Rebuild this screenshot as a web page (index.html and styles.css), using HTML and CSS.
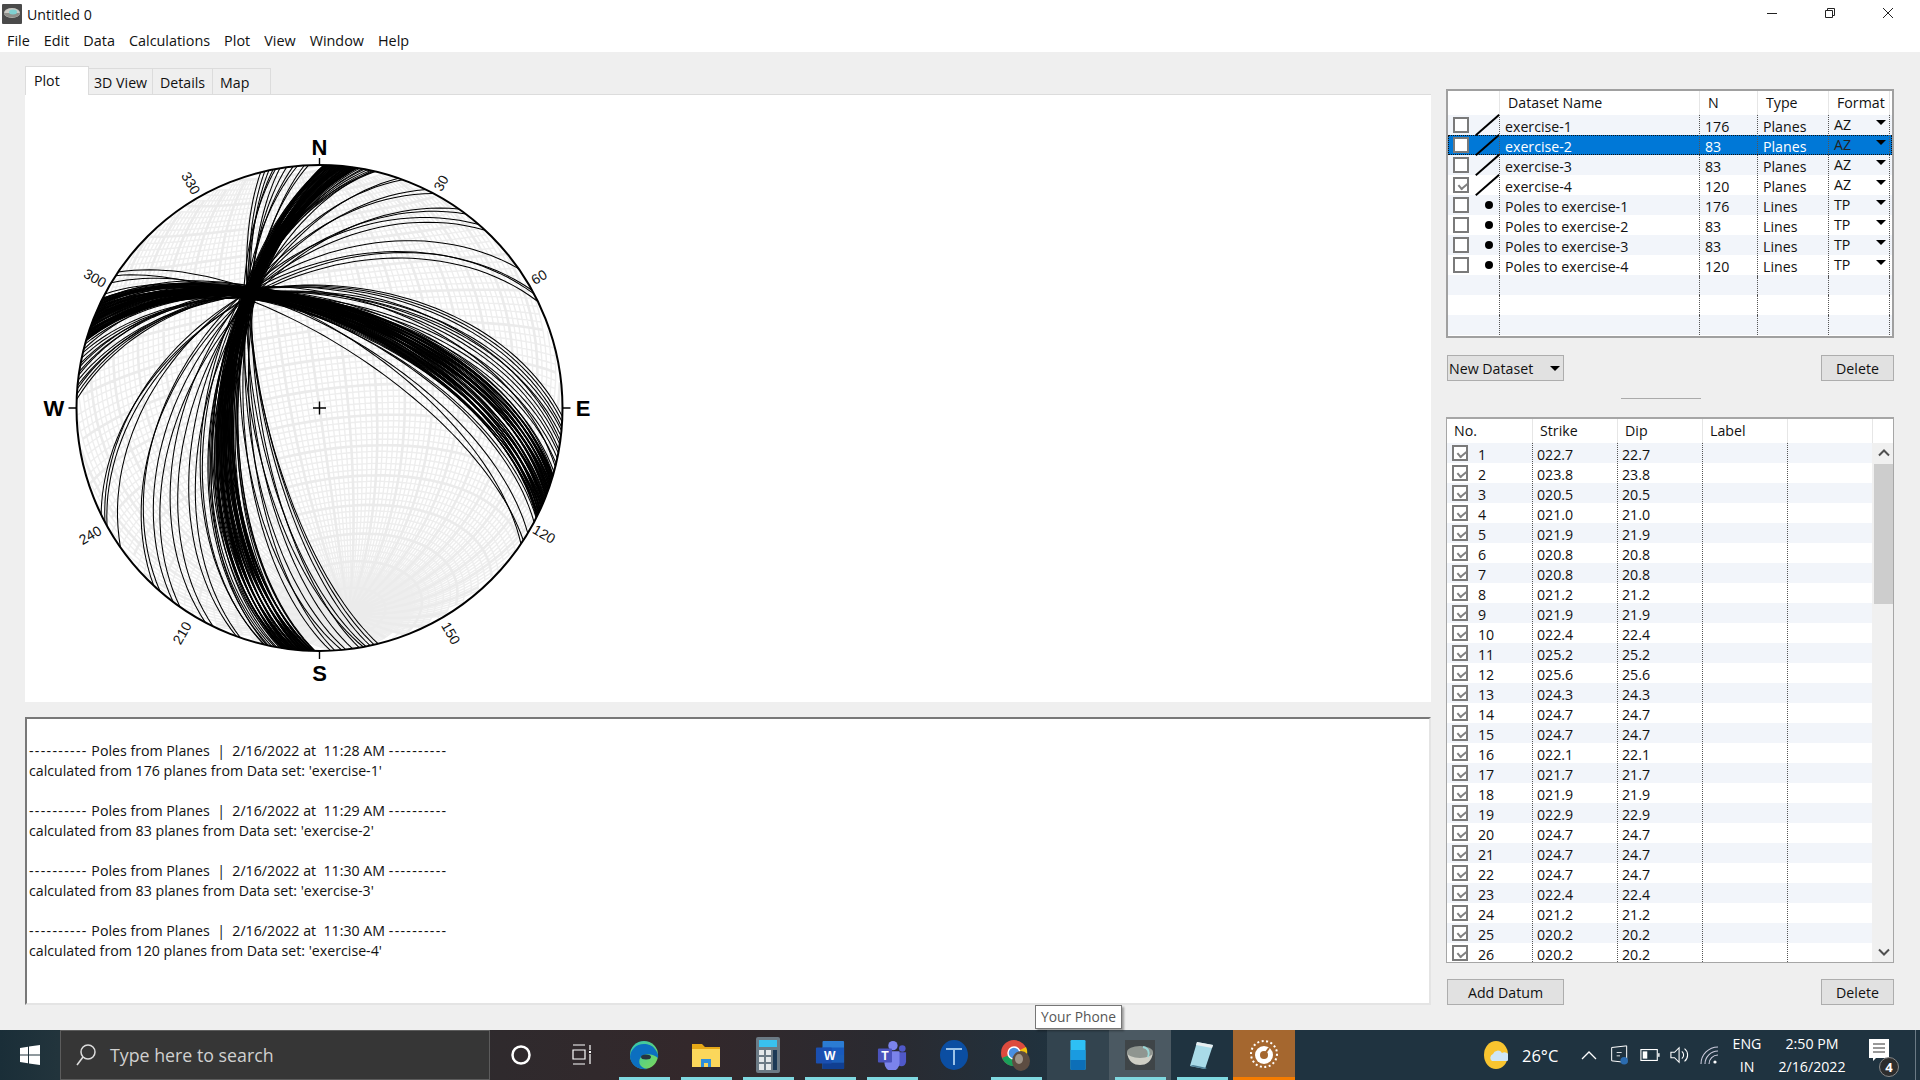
FILE: index.html
```html
<!DOCTYPE html>
<html lang="en">
<head>
<meta charset="utf-8">
<title>Untitled 0</title>
<link rel="stylesheet" href="styles.css">
</head>
<body>
<div class="app">
  <header class="titlebar">
    <svg class="appicon" viewBox="0 0 20 20"><rect width="20" height="20" rx="1" fill="#4a4a4a"/><ellipse cx="10" cy="9" rx="8" ry="5" fill="#c9c9c4"/><path d="M2 9c1 6 15 6 16 0z" fill="#8f8f8a"/><ellipse cx="11" cy="8" rx="4" ry="2.5" fill="#7fd0d0"/></svg>
    <span class="wintitle">Untitled 0</span>
    <div class="winbtns">
      <svg class="winbtn" viewBox="0 0 12 12"><path d="M1 6.5h10" stroke="#222" fill="none"/></svg>
      <svg class="winbtn" viewBox="0 0 12 12"><path d="M1.5 3.5h7v7h-7zM3.5 3.5v-2h7v7h-2" stroke="#222" fill="none"/></svg>
      <svg class="winbtn" viewBox="0 0 12 12"><path d="M1 1l10 10M11 1L1 11" stroke="#222" fill="none"/></svg>
    </div>
  </header>
  <nav class="menubar">
    <span class="menuitem">File</span><span class="menuitem">Edit</span><span class="menuitem">Data</span><span class="menuitem">Calculations</span><span class="menuitem">Plot</span><span class="menuitem">View</span><span class="menuitem">Window</span><span class="menuitem">Help</span>
  </nav>
  <main class="main">
    <section class="leftcol">
      <div class="tabs">
        <span class="tab active">Plot</span><span class="tab t3d">3D View</span><span class="tab tdet">Details</span><span class="tab tmap">Map</span>
      </div>
      <div class="plotpanel">
        <svg id="net" class="net" width="640" height="607" viewBox="0 0 640 607">
          <g id="grid"></g>
          <g id="planes"></g>
          <circle class="rim" cx="294.5" cy="313" r="243"/>
          <path class="tick" d="M294.5 70v-7M294.5 556v8M51.5 313h-8M537.5 313h8M288 313h13M294.5 306.500v13"/>
          <text class="cardinal" x="294.5" y="60">N</text>
          <text class="cardinal" x="294.5" y="586">S</text>
          <text class="cardinal" x="29" y="321">W</text>
          <text class="cardinal" x="558" y="321">E</text>
          <text class="deg" transform="translate(416 88) rotate(-60)">30</text>
          <text class="deg" transform="translate(514 182) rotate(-30)">60</text>
          <text class="deg" transform="translate(519 439) rotate(30)">120</text>
          <text class="deg" transform="translate(426 538) rotate(60)">150</text>
          <text class="deg" transform="translate(157 538) rotate(-60)">210</text>
          <text class="deg" transform="translate(65 440) rotate(-30)">240</text>
          <text class="deg" transform="translate(70 183) rotate(30)">300</text>
          <text class="deg" transform="translate(166 88) rotate(60)">330</text>
        </svg>
      </div>
      <div class="log">
        <p class="logline">&nbsp;</p>
        <p class="logline"><span class="dash">----------</span> Poles from Planes &nbsp;|&nbsp; 2/16/2022 at &nbsp;11:28 AM <span class="dash">----------</span></p>
        <p class="logline">calculated from 176 planes from Data set: 'exercise-1'</p>
        <p class="logline">&nbsp;</p>
        <p class="logline"><span class="dash">----------</span> Poles from Planes &nbsp;|&nbsp; 2/16/2022 at &nbsp;11:29 AM <span class="dash">----------</span></p>
        <p class="logline">calculated from 83 planes from Data set: 'exercise-2'</p>
        <p class="logline">&nbsp;</p>
        <p class="logline"><span class="dash">----------</span> Poles from Planes &nbsp;|&nbsp; 2/16/2022 at &nbsp;11:30 AM <span class="dash">----------</span></p>
        <p class="logline">calculated from 83 planes from Data set: 'exercise-3'</p>
        <p class="logline">&nbsp;</p>
        <p class="logline"><span class="dash">----------</span> Poles from Planes &nbsp;|&nbsp; 2/16/2022 at &nbsp;11:30 AM <span class="dash">----------</span></p>
        <p class="logline">calculated from 120 planes from Data set: 'exercise-4'</p>
      </div>
    </section>
    <aside class="rightcol">
      <div class="dstable">
        <div class="dshead"><span></span><span>Dataset Name</span><span>N</span><span>Type</span><span>Format</span><span></span></div>
        <div class="dsrow"><span class="c0"><i class="cb"></i><i class="ln"></i></span><span>exercise-1</span><span>176</span><span>Planes</span><span class="fmt">AZ<i class="tri"></i></span><span></span></div>
        <div class="dsrow sel"><span class="c0"><i class="cb"></i><i class="ln"></i></span><span>exercise-2</span><span>83</span><span>Planes</span><span class="fmt">AZ<i class="tri"></i></span><span></span></div>
        <div class="dsrow"><span class="c0"><i class="cb"></i><i class="ln"></i></span><span>exercise-3</span><span>83</span><span>Planes</span><span class="fmt">AZ<i class="tri"></i></span><span></span></div>
        <div class="dsrow"><span class="c0"><i class="cb on"></i><i class="ln"></i></span><span>exercise-4</span><span>120</span><span>Planes</span><span class="fmt">AZ<i class="tri"></i></span><span></span></div>
        <div class="dsrow"><span class="c0"><i class="cb"></i><i class="dot"></i></span><span>Poles to exercise-1</span><span>176</span><span>Lines</span><span class="fmt">TP<i class="tri"></i></span><span></span></div>
        <div class="dsrow"><span class="c0"><i class="cb"></i><i class="dot"></i></span><span>Poles to exercise-2</span><span>83</span><span>Lines</span><span class="fmt">TP<i class="tri"></i></span><span></span></div>
        <div class="dsrow"><span class="c0"><i class="cb"></i><i class="dot"></i></span><span>Poles to exercise-3</span><span>83</span><span>Lines</span><span class="fmt">TP<i class="tri"></i></span><span></span></div>
        <div class="dsrow"><span class="c0"><i class="cb"></i><i class="dot"></i></span><span>Poles to exercise-4</span><span>120</span><span>Lines</span><span class="fmt">TP<i class="tri"></i></span><span></span></div>
        <div class="dsrow"><span></span><span></span><span></span><span></span><span></span><span></span></div>
        <div class="dsrow"><span></span><span></span><span></span><span></span><span></span><span></span></div>
        <div class="dsrow"><span></span><span></span><span></span><span></span><span></span><span></span></div>
      </div>
      <div class="btnrow">
        <span class="btn btnwide btnleft">New Dataset<i class="tri tridark"></i></span>
        <span class="btn btnnarrow">Delete</span>
      </div>
      <div class="splitter"></div>
      <div class="ptable">
        <div class="phead"><span>No.</span><span>Strike</span><span>Dip</span><span>Label</span><span></span><span></span></div>
        <div class="pbody">
          <div class="prows">
            <div class="prow"><span class="c0"><i class="cb on"></i><b>1</b></span><span>022.7</span><span>22.7</span><span></span><span></span></div>
            <div class="prow"><span class="c0"><i class="cb on"></i><b>2</b></span><span>023.8</span><span>23.8</span><span></span><span></span></div>
            <div class="prow"><span class="c0"><i class="cb on"></i><b>3</b></span><span>020.5</span><span>20.5</span><span></span><span></span></div>
            <div class="prow"><span class="c0"><i class="cb on"></i><b>4</b></span><span>021.0</span><span>21.0</span><span></span><span></span></div>
            <div class="prow"><span class="c0"><i class="cb on"></i><b>5</b></span><span>021.9</span><span>21.9</span><span></span><span></span></div>
            <div class="prow"><span class="c0"><i class="cb on"></i><b>6</b></span><span>020.8</span><span>20.8</span><span></span><span></span></div>
            <div class="prow"><span class="c0"><i class="cb on"></i><b>7</b></span><span>020.8</span><span>20.8</span><span></span><span></span></div>
            <div class="prow"><span class="c0"><i class="cb on"></i><b>8</b></span><span>021.2</span><span>21.2</span><span></span><span></span></div>
            <div class="prow"><span class="c0"><i class="cb on"></i><b>9</b></span><span>021.9</span><span>21.9</span><span></span><span></span></div>
            <div class="prow"><span class="c0"><i class="cb on"></i><b>10</b></span><span>022.4</span><span>22.4</span><span></span><span></span></div>
            <div class="prow"><span class="c0"><i class="cb on"></i><b>11</b></span><span>025.2</span><span>25.2</span><span></span><span></span></div>
            <div class="prow"><span class="c0"><i class="cb on"></i><b>12</b></span><span>025.6</span><span>25.6</span><span></span><span></span></div>
            <div class="prow"><span class="c0"><i class="cb on"></i><b>13</b></span><span>024.3</span><span>24.3</span><span></span><span></span></div>
            <div class="prow"><span class="c0"><i class="cb on"></i><b>14</b></span><span>024.7</span><span>24.7</span><span></span><span></span></div>
            <div class="prow"><span class="c0"><i class="cb on"></i><b>15</b></span><span>024.7</span><span>24.7</span><span></span><span></span></div>
            <div class="prow"><span class="c0"><i class="cb on"></i><b>16</b></span><span>022.1</span><span>22.1</span><span></span><span></span></div>
            <div class="prow"><span class="c0"><i class="cb on"></i><b>17</b></span><span>021.7</span><span>21.7</span><span></span><span></span></div>
            <div class="prow"><span class="c0"><i class="cb on"></i><b>18</b></span><span>021.9</span><span>21.9</span><span></span><span></span></div>
            <div class="prow"><span class="c0"><i class="cb on"></i><b>19</b></span><span>022.9</span><span>22.9</span><span></span><span></span></div>
            <div class="prow"><span class="c0"><i class="cb on"></i><b>20</b></span><span>024.7</span><span>24.7</span><span></span><span></span></div>
            <div class="prow"><span class="c0"><i class="cb on"></i><b>21</b></span><span>024.7</span><span>24.7</span><span></span><span></span></div>
            <div class="prow"><span class="c0"><i class="cb on"></i><b>22</b></span><span>024.7</span><span>24.7</span><span></span><span></span></div>
            <div class="prow"><span class="c0"><i class="cb on"></i><b>23</b></span><span>022.4</span><span>22.4</span><span></span><span></span></div>
            <div class="prow"><span class="c0"><i class="cb on"></i><b>24</b></span><span>021.2</span><span>21.2</span><span></span><span></span></div>
            <div class="prow"><span class="c0"><i class="cb on"></i><b>25</b></span><span>020.2</span><span>20.2</span><span></span><span></span></div>
            <div class="prow"><span class="c0"><i class="cb on"></i><b>26</b></span><span>020.2</span><span>20.2</span><span></span><span></span></div>
          </div>
          <div class="scroll">
            <svg class="scrollarrow" viewBox="0 0 20 20"><path d="M5 12l5-5 5 5" fill="none" stroke="#505050" stroke-width="2"/></svg>
            <div class="thumb"></div>
            <svg class="scrollarrow scrolldown" viewBox="0 0 20 20"><path d="M5 8l5 5 5-5" fill="none" stroke="#505050" stroke-width="2"/></svg>
          </div>
        </div>
      </div>
      <div class="btnrow btnrowb">
        <span class="btn btnwide">Add Datum</span>
        <span class="btn btnnarrow">Delete</span>
      </div>
    </aside>
  </main>
  <footer class="taskbar">
    <div class="start">
      <svg class="ic20" viewBox="0 0 20 20"><path d="M0 3l8-1.2V9.500H0zM9 1.600L20 0v9.500H9zM0 10.500h8v7.700L0 17zM9 10.500h11V20L9 18.400z" fill="#fff"/></svg>
    </div>
    <div class="search">
      <svg class="searchicon" viewBox="0 0 20 24"><circle cx="12" cy="9" r="7" fill="none" stroke="#ddd" stroke-width="1.500"/><path d="M7 14L1 22" stroke="#ddd" stroke-width="1.500"/></svg>
      <span class="searchtext">Type here to search</span>
    </div>
    <div class="slot sys"><svg class="ic22" viewBox="0 0 22 22"><circle cx="11" cy="11" r="8.500" fill="none" stroke="#fff" stroke-width="2.500"/></svg></div>
    <div class="slot sys"><svg class="ic22" viewBox="0 0 22 22"><path d="M2 1h12M2 6h12v9H2zM2 20h12M19 1v5M19 10v10" fill="none" stroke="#fff" stroke-width="1.200"/><rect x="18" y="7" width="2" height="2" fill="#fff"/></svg></div>
    <div class="slot run"><svg class="ic30" viewBox="0 0 30 30"><defs><linearGradient id="eg" x1="0" y1="0" x2="1" y2="1"><stop offset="0" stop-color="#2ec4b6"/><stop offset="1" stop-color="#7ed957"/></linearGradient></defs><circle cx="15" cy="15" r="14" fill="url(#eg)"/><path d="M1 17C2 27 12 30 18 29 10 28 8 20 13 16c4-3 12-2 16 2 1-3-1-6-3-9C22 3 10 2 5 8 3 10 1 13 1 17z" fill="#0c6fc0"/><ellipse cx="17" cy="17" rx="5" ry="2.500" fill="#27343e"/></svg></div>
    <div class="slot run"><svg class="ic30" viewBox="0 0 30 30"><path d="M1 4h10l3 3h15v6H1z" fill="#e6a817"/><path d="M1 9h28v18H1z" fill="#fbd75b"/><path d="M10 19h10v8h-3v-4h-4v4h-3z" fill="#2f8fdc"/></svg></div>
    <div class="slot run"><svg class="ic36" viewBox="0 0 24 36"><rect width="24" height="36" rx="2" fill="#6b7a85"/><rect x="3" y="3" width="18" height="7" fill="#39c0ee"/><path d="M3 13h5v5H3zM10 13h5v5h-5zM3 20h5v5H3zM10 20h5v5h-5zM3 27h5v6H3zM10 27h5v6h-5z" fill="#e4e8ea"/><rect x="17" y="13" width="4" height="20" fill="#1c3a57"/></svg></div>
    <div class="slot run"><svg class="ic30" viewBox="0 0 30 32"><rect x="7" y="1" width="23" height="30" rx="1" fill="#2b7cd3"/><rect x="7" y="8" width="23" height="8" fill="#185abd"/><rect x="7" y="16" width="23" height="8" fill="#1b5eb8"/><rect x="7" y="24" width="23" height="7" fill="#103f91"/><rect y="8" width="17" height="17" rx="1" fill="#1a4fb0"/><text class="wordw" x="8.500" y="21">W</text></svg></div>
    <div class="slot run"><svg class="ic30" viewBox="0 0 30 32"><circle cx="16" cy="6" r="5" fill="#7b83eb"/><circle cx="26" cy="9" r="3.500" fill="#5059c9"/><path d="M20 13h10v10a5 5 0 0 1-10 0z" fill="#5059c9"/><path d="M7 12h16v13a8 8 0 0 1-16 0z" fill="#7b83eb"/><rect y="9" width="15" height="15" rx="1" fill="#4b53bc"/><text class="wordw" x="3.500" y="21">T</text></svg></div>
    <div class="slot"><svg class="ic30" viewBox="0 0 30 30"><ellipse cx="15" cy="15" rx="14" ry="15" fill="#0b4ea2"/><path d="M7 8h16v2h-7v15h-2V10H7z" fill="#9cc3e8"/></svg></div>
    <div class="slot run"><svg class="ic32" viewBox="0 0 32 32"><circle cx="14" cy="14" r="13" fill="#dd4b3e"/><path d="M14 14L26 8a13 13 0 0 1-8 18z" fill="#f4c20d"/><path d="M14 14L16 27A13 13 0 0 1 2 19z" fill="#19a05a"/><circle cx="14" cy="14" r="6" fill="#4a90e2" stroke="#fff" stroke-width="1.500"/><ellipse cx="21" cy="22" rx="9" ry="10" fill="#5d4d42"/><ellipse cx="19" cy="20" rx="4" ry="5" fill="#a0968a"/></svg></div>
    <div class="slot hover"><svg class="ic30" viewBox="0 0 20 36"><rect width="18" height="36" x="1" rx="1.500" fill="#2ec0f5"/><rect x="1" y="12" width="18" height="12" fill="#1a9be0"/><path d="M1 24h18v10.500a1.500 1.500 0 0 1-1.500 1.500h-15A1.500 1.500 0 0 1 1 34.500z" fill="#0d6fb8"/></svg></div>
    <div class="slot active run"><svg class="ic30" viewBox="0 0 30 30"><rect width="30" height="30" fill="#3f4548"/><path d="M2 12c1 10 7 13 13 13s12-3 13-13z" fill="#cfcfc6"/><ellipse cx="15" cy="12" rx="13" ry="6" fill="#8f9590"/><path d="M18 7c5 1 7 5 5 10" stroke="#9ad6d6" stroke-width="2" fill="none"/></svg></div>
    <div class="slot run"><svg class="ic30" viewBox="0 0 30 30"><path d="M10 2l16 3-8 24L3 26z" fill="#a9dbe8"/><path d="M10 2l16 3-1 3-16-3z" fill="#e8eef0"/><path d="M3 26l15 3 2-1-14-3z" fill="#4d7f96"/></svg></div>
    <div class="slot orange"><svg class="ic30" viewBox="0 0 30 30"><circle cx="15" cy="15" r="13" fill="none" stroke="#fff" stroke-width="2" stroke-dasharray="2 2.500"/><circle cx="15" cy="16" r="9" fill="#fff"/><circle cx="15" cy="16" r="4" fill="#a5672f"/><path d="M15 16l5-7" stroke="#a5672f" stroke-width="2"/></svg></div>
    <div class="tray">
      <svg class="weather" viewBox="0 0 24 28"><ellipse cx="12" cy="14" rx="12" ry="14" fill="#f8c42f"/><path d="M8 20a4 4 0 0 1 1-7 5 5 0 0 1 9-1 4 4 0 0 1 5 8z" fill="#cfe6f7"/></svg>
      <span class="temp">26°C</span>
      <svg class="chev" viewBox="0 0 16 10"><path d="M1 9l7-7 7 7" fill="none" stroke="#fff" stroke-width="1.300"/></svg>
      <svg class="tray20 first" viewBox="0 0 22 24"><path d="M1 3l18-2v20L1 19z" fill="none" stroke="#fff" stroke-width="1.200"/><path d="M7 9h6M7 13h4" stroke="#fff"/><circle cx="16" cy="19" r="4.500" fill="#2b6cb0"/></svg>
      <svg class="tray20" viewBox="0 0 22 14"><rect x="1" y="1" width="18" height="12" fill="none" stroke="#fff" stroke-width="1.200"/><rect x="3" y="3" width="5" height="8" fill="#fff"/><rect x="20" y="5" width="1.500" height="4" fill="#fff"/></svg>
      <svg class="tray20" viewBox="0 0 22 20"><path d="M1 7h4l5-5v16l-5-5H1z" fill="none" stroke="#fff" stroke-width="1.200"/><path d="M13 6a5 5 0 0 1 0 8M16 3a9 9 0 0 1 0 14" fill="none" stroke="#fff" stroke-width="1.200"/></svg>
      <svg class="tray20" viewBox="0 0 20 20"><path d="M1 19A17 17 0 0 1 18 2M5 19A13 13 0 0 1 18 6M9 19A9 9 0 0 1 18 10" fill="none" stroke="#ccd" stroke-width="1.100"/><circle cx="15" cy="17" r="1.600" fill="#fff"/></svg>
      <div class="twoline lang"><span>ENG</span><span>IN</span></div>
      <div class="twoline clock"><span>2:50 PM</span><span>2/16/2022</span></div>
      <div class="notif">
        <svg class="notifbox" viewBox="0 0 20 22"><path d="M0 0h20v19H7l-3 3v-3H0z" fill="#fff"/><path d="M4 5h12M4 9h12M4 13h12" stroke="#333"/></svg>
        <span class="badge">4</span>
      </div>
      <div class="showdesk"></div>
    </div>
  </footer>
  <div class="tooltip">Your Phone</div>
</div>
<script src="script.js"></script>
</body>
</html>
```

FILE: styles.css
```css
* { box-sizing: border-box; }
html, body { margin: 0; padding: 0; }
body { width: 1920px; height: 1080px; overflow: hidden; font-family: "Open Sans", "Noto Sans", sans-serif; font-size: 14.200px; color: #111; background: #fff; }
.app { position: relative; display: flex; flex-direction: column; width: 1920px; height: 1080px; }

.titlebar { display: flex; align-items: center; height: 26px; background: #fff; padding-left: 2px; flex: none; }
.appicon { width: 20px; height: 20px; margin-top: 2px; }
.wintitle { margin-left: 5px; font-size: 14.200px; margin-top: 3px; }
.winbtns { margin-left: auto; display: flex; gap: 46px; padding-right: 26px; }
.winbtn { width: 12px; height: 12px; }

.menubar { display: flex; align-items: center; height: 26px; padding: 2px 0 0; background: #fff; flex: none; font-size: 14.400px; }
.menuitem { padding: 0 7px; }

.main { flex: 1; display: flex; background: #efefef; min-height: 0; }
.leftcol { width: 1431px; padding: 15px 0 25px 25px; display: flex; flex-direction: column; flex: none; }
.tabs { display: flex; align-items: flex-end; height: 28px; flex: none; border-bottom: 1px solid #dcdcdc; }
.tab { display: block; height: 26px; border: 1px solid #dcdcdc; border-left: 0; border-bottom: 0; padding: 4px 0 0 5px; font-size: 14.200px; line-height: 20px; white-space: nowrap; }
.tab.active { height: 29px; margin-bottom: -1px; width: 64px; background: #fff; border-left: 1px solid #dcdcdc; padding: 4px 0 0 8px; position: relative; }
.t3d { width: 64px; }
.tdet { width: 60px; padding-left: 7px; }
.tmap { width: 58px; padding-left: 7px; }
.plotpanel { height: 607px; background: #fff; flex: none; overflow: hidden; }
.net { display: block; }
.rim { fill: none; stroke: #000; stroke-width: 2; }
.tick { fill: none; stroke: #000; stroke-width: 1.400; }
.cardinal { font-family: "Liberation Sans", sans-serif; font-weight: 700; font-size: 22px; text-anchor: middle; fill: #000; }
.deg { font-family: "Liberation Sans", sans-serif; font-size: 14px; text-anchor: middle; dominant-baseline: central; fill: #111; }
.gf { fill: none; stroke: #eeeeee; stroke-width: 1.400; }
.gm { fill: none; stroke: #ebebeb; stroke-width: 2.600; }
.pl { fill: none; stroke: #000; stroke-width: 1.050; }

.log { margin-top: 15px; height: 288px; background: #fff; border-style: solid; border-width: 2px; border-color: #787878 #e4e4e4 #e4e4e4 #787878; padding: 2px 0 0 2px; flex: none; }
.logline { margin: 0; height: 20px; line-height: 20px; font-size: 14.200px; white-space: nowrap; }
.dash { letter-spacing: 1.300px; }

.rightcol { width: 448px; margin-left: 15px; padding-top: 37px; display: flex; flex-direction: column; flex: none; }
.dstable { height: 249px; background: #fff; border: 2px solid #a0a0a0; flex: none; }
.dshead, .dsrow { display: grid; grid-template-columns: 51px 200px 58px 71px 61px 3px; }
.dshead { height: 24px; line-height: 23px; }
.dshead span { padding-left: 8px; border-left: 1px solid #e6e6e6; white-space: nowrap; }
.dshead span:first-child { border-left: 0; }
.dsrow { height: 20px; line-height: 23px; }
.dsrow:nth-child(even) { background: #f2f5fa; }
.dsrow > span { padding-left: 5px; border-left: 1px dotted #555; position: relative; white-space: nowrap; }
.dsrow > span:first-child { border-left: 0; padding-left: 0; }
.dsrow .fmt { line-height: 20px; }
.dsrow.sel { background: #0078d7; color: #fff; outline: 1.500px dotted #111; outline-offset: -1.500px; }
.dsrow.sel .fmt { color: #222; }
.c0 { display: block; position: relative; height: 20px; }
.cb { position: absolute; left: 5px; top: 2px; width: 16px; height: 16px; background: #fff; border: 2px solid #7a7a7a; display: block; }
.cb.on::after { content: ""; position: absolute; left: 3px; top: 1px; width: 7px; height: 4px; border-left: 2px solid #808080; border-bottom: 2px solid #808080; transform: rotate(-40deg) translate(-1px, 2px); }
.ln { position: absolute; left: 24px; top: 9px; width: 31px; height: 2px; background: #000; transform: rotate(-41deg); transform-origin: center; display: block; }
.dot { position: absolute; left: 37px; top: 6px; width: 8px; height: 8px; border-radius: 50%; background: #000; display: block; }
.tri { position: absolute; right: 3px; top: 5px; width: 0; height: 0; border-left: 5px solid transparent; border-right: 5px solid transparent; border-top: 5px solid #000; display: block; }
.fmt { position: relative; }

.btnrow { display: flex; justify-content: space-between; margin-top: 17px; padding: 0 0 0 1px; flex: none; }
.btnrowb { margin-top: 16px; }
.btn { display: block; position: relative; height: 26px; line-height: 25px; background: #e1e1e1; border: 1px solid #adadad; text-align: center; font-size: 14.200px; }
.btnwide { width: 117px; }
.btnnarrow { width: 73px; }
.btnleft { text-align: left; padding-left: 1px; }
.tridark { right: 3px; top: 10px; }
.splitter { width: 80px; height: 1px; background: #aaa; margin: 17px 0 18px 175px; flex: none; }

.ptable { height: 546px; background: #fff; border: 1px solid #a6a6a6; border-top-width: 2px; display: flex; flex-direction: column; flex: none; overflow: hidden; }
.phead { display: grid; grid-template-columns: 85px 85px 85px 85px 85px 1fr; height: 24px; line-height: 23px; flex: none; }
.phead span { padding-left: 7px; border-left: 1px solid #e6e6e6; }
.phead span:first-child { border-left: 0; }
.pbody { display: flex; flex: 1; min-height: 0; }
.prows { width: 425px; overflow: hidden; flex: none; }
.prow { display: grid; grid-template-columns: 85px 85px 85px 85px 85px; height: 20px; line-height: 23px; }
.prow:nth-child(odd) { background: #f2f5fa; }
.prow > span { padding-left: 4px; border-left: 1px dotted #555; }
.prow > span:first-child { border-left: 0; padding-left: 0; }
.prow b { font-weight: 400; position: absolute; left: 31px; top: 0; }
.scroll { flex: 1; background: #f0f0f0; display: flex; flex-direction: column; padding-left: 2px; }
.scrollarrow { width: 20px; height: 21px; flex: none; }
.thumb { height: 140px; background: #cdcdcd; flex: none; }
.scrolldown { margin-top: auto; margin-bottom: 0; }

.taskbar { height: 50px; flex: none; display: flex; background: linear-gradient(90deg, #1a2e38 0%, #22343c 3%, #2f2a2d 26%, #33282b 36%, #2a2a30 46%, #1f3340 56%, #1f3340 100%); color: #fff; }
.start { width: 60px; display: flex; align-items: center; justify-content: center; flex: none; }
.ic20 { width: 20px; height: 20px; }
.search { width: 430px; background: #363636; border: 1px solid #5c5c5c; display: flex; align-items: center; padding-left: 15px; flex: none; }
.searchicon { width: 20px; height: 24px; }
.searchtext { margin-left: 14px; font-size: 17.800px; color: #d0d0d0; }
.slot { width: 62px; flex: none; display: flex; align-items: center; justify-content: center; position: relative; }
.sys { width: 61.500px; }
.ic22 { width: 22px; height: 22px; }
.ic30 { width: 30px; height: 30px; }
.ic32 { width: 32px; height: 32px; }
.ic36 { width: 24px; height: 36px; }
.wordw { font-family: "Liberation Sans", sans-serif; font-size: 13px; font-weight: 700; fill: #fff; }
.run::after { content: ""; position: absolute; left: 5.500px; right: 5.500px; bottom: 0; height: 3px; background: #7fd8e0; }
.hover { background: #33444f; }
.active { background: #4b5962; }
.orange { background: #a5672f; border-bottom: 3px solid #f57c00; }
.tray { flex: 1; position: relative; display: flex; align-items: center; padding-left: 189px; }
.weather { width: 24px; height: 28px; }
.temp { margin-left: 14px; font-size: 16.500px; width: 52px; white-space: nowrap; }
.chev { width: 16px; height: 10px; margin-left: 7px; }
.tray20 { width: 20px; height: 20px; margin-left: 10px; }
.tray20.first { margin-left: 13px; }
.twoline { display: flex; flex-direction: column; align-items: center; font-size: 14.200px; line-height: 23px; white-space: nowrap; }
.lang { width: 30px; margin-left: 12px; }
.clock { width: 70px; margin-left: 15px; }
.notif { position: relative; width: 34px; height: 40px; margin-left: 16px; }
.notifbox { position: absolute; left: 6px; top: 4px; width: 20px; height: 22px; }
.badge { position: absolute; left: 16px; top: 22px; width: 20px; height: 20px; line-height: 18px; border-radius: 50%; border: 1px solid #888; background: #2d2d2d; text-align: center; font-size: 13px; font-weight: 700; }
.showdesk { position: absolute; right: 4px; top: 0; bottom: 0; width: 1px; background: #6b7a85; }

.tooltip { position: absolute; left: 1035px; top: 1005px; width: 87px; height: 24px; line-height: 22px; text-align: center; background: #fff; border: 1px solid #767676; box-shadow: 2px 2px 2px rgba(0,0,0,.35); font-size: 13.800px; color: #575757; }
```

FILE: script.js
```js
(function () {
  var NS = "http://www.w3.org/2000/svg";
  var CX = 294.5, CY = 313, R = 243;
  var RAD = Math.PI / 180;

  function project(n, e, d) {
    var h = Math.sqrt(n * n + e * e) || 1e-9;
    var r = R * Math.sqrt(Math.max(0, 1 - d));
    return [CX + r * e / h, CY - r * n / h];
  }

  function vec(trend, plunge) {
    var t = trend * RAD, p = plunge * RAD;
    return [Math.cos(p) * Math.cos(t), Math.cos(p) * Math.sin(t), Math.sin(p)];
  }

  function addPath(parent, cls, d) {
    var el = document.createElementNS(NS, "path");
    el.setAttribute("class", cls);
    el.setAttribute("d", d);
    parent.appendChild(el);
  }

  function segments(points) {
    var out = "", pen = false;
    points.forEach(function (v) {
      if (v[2] < 0) { pen = false; return; }
      var q = project(v[0], v[1], v[2]);
      out += (pen ? "L" : "M") + q[0].toFixed(1) + " " + q[1].toFixed(1);
      pen = true;
    });
    return out;
  }

  function net(gridEl, trend, plunge) {
    var p = vec(trend, plunge);
    var u = vec(trend, plunge - 90);
    var v = [p[1] * u[2] - p[2] * u[1], p[2] * u[0] - p[0] * u[2], p[0] * u[1] - p[1] * u[0]];
    function at(col, lon) {
      var a = col * RAD, b = lon * RAD;
      var s = Math.sin(a), c = Math.cos(a), cl = Math.cos(b), sl = Math.sin(b);
      return [0, 1, 2].map(function (i) { return c * p[i] + s * (cl * u[i] + sl * v[i]); });
    }
    var fine = "", major = "", pts, i, k;
    for (k = 0; k < 360; k += 2) {
      pts = [];
      var maj = k % 10 === 0;
      var from = maj ? 0 : 4, to = maj ? 180 : 176;
      for (i = from; i <= to; i += 4) pts.push(at(i, k));
      if (maj) major += segments(pts); else fine += segments(pts);
    }
    for (k = 2; k < 180; k += 2) {
      pts = [];
      for (i = 0; i <= 360; i += 4) pts.push(at(k, i));
      if (k % 10 === 0) major += segments(pts); else fine += segments(pts);
    }
    addPath(gridEl, "gf", fine);
    addPath(gridEl, "gm", major);
  }

  function plane(strike, seed) {
    var jt = ((seed * 0.7548777) % 1) - 0.5;
    var jp = ((seed * 0.5698403) % 1) - 0.5;
    var lt = 329 + jt * 6, lp = 44 + jp * 3;
    var delta = (lt - strike) * RAD;
    var sn = Math.sin(delta);
    var dip = Math.atan(Math.tan(lp * RAD) / Math.abs(sn)) / RAD;
    var dd = strike + (sn > 0 ? 90 : -90);
    var a = vec(strike, 0), b = vec(dd, dip), pts = [];
    for (var t = 0; t <= 180; t += 3) {
      var c = Math.cos(t * RAD), s = Math.sin(t * RAD);
      pts.push([c * a[0] + s * b[0], c * a[1] + s * b[1], Math.max(0, c * a[2] + s * b[2])]);
    }
    return segments(pts);
  }

  var grid = document.getElementById("grid");
  var planes = document.getElementById("planes");
  net(grid, 172, 16);

  var seed = 1;
  function one(s) { addPath(planes, "pl", plane(s, seed++)); }
  function band(a, b, n) {
    for (var i = 0; i < n; i++) one(a + (b - a) * ((i * 0.618034) % 1));
  }
  band(1, 9, 56);
  band(9, 14, 8);
  [13, 19, 20, 26, 28, 35, 37, 41, 43, 55, 61, 62, 64].forEach(one);
  band(286, 297, 70);
  band(272, 286, 13);
  [298, 301, 303, 304].forEach(one);
  band(347, 358, 9);
  [346, 349].forEach(one);
})();
```
